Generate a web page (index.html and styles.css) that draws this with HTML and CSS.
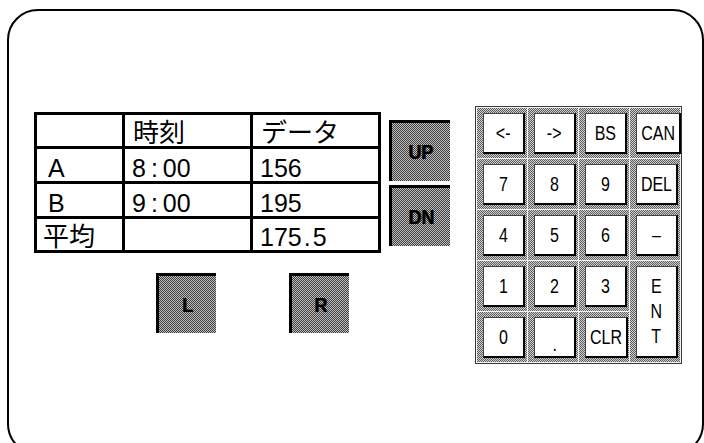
FILE: index.html
```html
<!DOCTYPE html>
<html lang="ja">
<head>
  <meta charset="UTF-8">
  <meta name="viewport" content="width=device-width, initial-scale=1.0">
  <title>データ表示</title>
  <link rel="stylesheet" href="styles.css">
</head>
<body>
  <div class="panel">
    <div class="left-col">
      <table class="data-table">
        <colgroup>
          <col class="c0">
          <col class="c1">
          <col class="c2">
        </colgroup>
        <tr class="head">
          <td></td>
          <td class="jp">時刻</td>
          <td class="jp">データ</td>
        </tr>
        <tr>
          <td class="name">A</td>
          <td>8<span class="colon">:</span>00</td>
          <td>156</td>
        </tr>
        <tr>
          <td class="name">B</td>
          <td>9<span class="colon">:</span>00</td>
          <td>195</td>
        </tr>
        <tr>
          <td class="jp avg">平均</td>
          <td></td>
          <td>175<span class="dot">.</span>5</td>
        </tr>
      </table>

      <div class="lr-row">
        <button class="sw"><span class="lbl">L</span></button>
        <button class="sw"><span class="lbl">R</span></button>
      </div>
    </div>

    <div class="ud-col">
      <button class="sw sw-ud"><span class="lbl">UP</span></button>
      <button class="sw sw-ud"><span class="lbl">DN</span></button>
    </div>

    <div class="keypad">
      <button class="key"><span class="face"><span class="lbl">&lt;-</span></span></button>
      <button class="key"><span class="face"><span class="lbl">-&gt;</span></span></button>
      <button class="key"><span class="face"><span class="lbl">BS</span></span></button>
      <button class="key"><span class="face"><span class="lbl">CAN</span></span></button>
      <button class="key"><span class="face"><span class="lbl">7</span></span></button>
      <button class="key"><span class="face"><span class="lbl">8</span></span></button>
      <button class="key"><span class="face"><span class="lbl">9</span></span></button>
      <button class="key"><span class="face"><span class="lbl">DEL</span></span></button>
      <button class="key"><span class="face"><span class="lbl">4</span></span></button>
      <button class="key"><span class="face"><span class="lbl">5</span></span></button>
      <button class="key"><span class="face"><span class="lbl">6</span></span></button>
      <button class="key"><span class="face"><span class="lbl">–</span></span></button>
      <button class="key"><span class="face"><span class="lbl">1</span></span></button>
      <button class="key"><span class="face"><span class="lbl">2</span></span></button>
      <button class="key"><span class="face"><span class="lbl">3</span></span></button>
      <button class="key key-ent"><span class="face"><span class="lbl">E<br>N<br>T</span></span></button>
      <button class="key"><span class="face"><span class="lbl">0</span></span></button>
      <button class="key"><span class="face"><span class="lbl small-dot">.</span></span></button>
      <button class="key"><span class="face"><span class="lbl">CLR</span></span></button>
    </div>
  </div>
</body>
</html>
```

FILE: styles.css
```css
html, body {
  margin: 0;
  height: 100%;
  overflow: hidden;
  background-color: #fff;
}

body {
  font-family: 'Liberation Sans', 'Noto Sans CJK JP', sans-serif;
  color: #000;
}

.panel {
  box-sizing: border-box;
  width: 697px;
  height: 446px;
  margin: 9px 0 0 7px;
  border: 2px solid #000;
  border-radius: 31px;
  padding: 95px 0 0 25px;
  display: flex;
  align-items: flex-start;
}

/* table + L/R */
.left-col {
  margin-top: 6px;
}

.data-table {
  table-layout: fixed;
  width: 347px;
  border-collapse: separate;
  border-spacing: 0;
  border-top: 3px solid #000;
  border-left: 3px solid #000;
  font-size: 25px;
  line-height: 24px;
}

.data-table .c0 { width: 88px; }
.data-table .c1 { width: 128px; }
.data-table .c2 { width: 128px; }

.data-table td {
  height: 34px;
  box-sizing: border-box;
  padding: 0 0 1px 7px;
  border-right: 3px solid #000;
  border-bottom: 3px solid #000;
  vertical-align: bottom;
  white-space: nowrap;
}

.data-table tr:nth-child(2) td,
.data-table tr:nth-child(3) td {
  height: 35px;
}

.data-table td.name {
  padding-left: 11px;
}

.data-table td.jp {
  font-size: 26px;
  padding-left: 8px;
}

.data-table td.avg {
  padding-left: 6px;
}

.colon {
  margin: 0 5px;
}

.dot {
  margin: 0 2px;
}

.lbl {
  display: inline-block;
  transform: scaleX(0.8);
}

/* dark switches */
.sw {
  box-sizing: border-box;
  width: 60px;
  height: 60px;
  padding: 0;
  border: none;
  border-top: 3px solid #000;
  border-left: 3px solid #000;
  background: repeating-conic-gradient(#3c3c3c 0 25%, #c2c2c2 0 50%) 0 0 / 2px 2px;
  font-family: 'Liberation Sans', sans-serif;
  font-weight: bold;
  font-size: 21px;
  color: #000;
  text-shadow: 1px 0 0 #222;
}

.sw .lbl {
  transform: scaleX(0.85);
}

.lr-row {
  display: flex;
  gap: 73px;
  margin-top: 20px;
  padding-left: 122px;
}

.ud-col {
  display: flex;
  flex-direction: column;
  gap: 4px;
  margin: 14px 0 0 8px;
}

.sw-ud {
  width: 61px;
  height: 61px;
}

/* keypad */
.keypad {
  display: grid;
  grid-template-columns: repeat(4, 50px);
  grid-template-rows: repeat(5, 50px);
  gap: 1px;
  padding: 1px;
  margin-left: 25px;
  border: 1px solid #3a3a3a;
  background-color: #f2f2f2;
}

.key {
  box-sizing: border-box;
  display: flex;
  padding: 5px 2px 4px 6px;
  border: none;
  background: repeating-conic-gradient(#5e5e5e 0 25%, #cfcfcf 0 50%) 0 0 / 2px 2px;
  font-family: 'Liberation Sans', sans-serif;
  font-size: 20px;
  color: #000;
}

.key .face {
  flex: 1;
  display: flex;
  align-items: center;
  justify-content: center;
  background-color: #fff;
  border-top: 1px solid #444;
  border-left: 1px solid #444;
  border-right: 2px solid #000;
  border-bottom: 2px solid #000;
  line-height: 1;
  white-space: nowrap;
}

.key-ent {
  grid-column: 4;
  grid-row: 4 / span 2;
}

.key-ent .lbl {
  line-height: 25px;
  text-align: center;
}

.small-dot {
  padding-top: 14px;
}
```
